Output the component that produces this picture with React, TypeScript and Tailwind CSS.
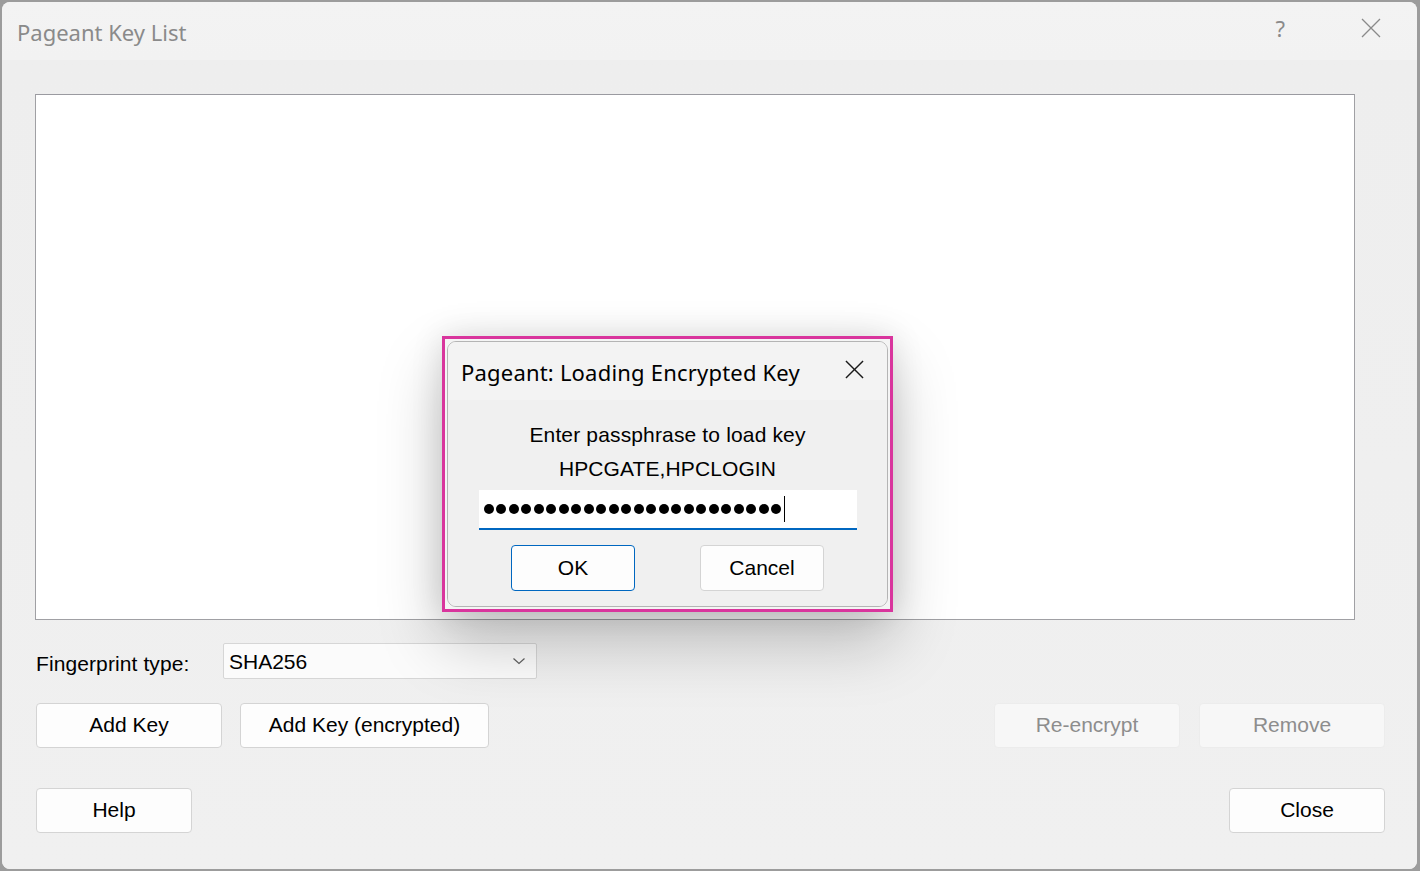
import React from "react";

const sans = { fontFamily: '"Liberation Sans", Arial, sans-serif' };
const ui = { fontFamily: '"Noto Sans", "Open Sans", sans-serif' };

function Btn({
  children,
  w,
  h = "h-[45px]",
  disabled,
  focused,
}: {
  children: React.ReactNode;
  w: string;
  h?: string;
  disabled?: boolean;
  focused?: boolean;
}) {
  return (
    <div
      className={`${w} ${h} flex items-center justify-center rounded-[4px] border text-[21px] ${
        disabled
          ? "bg-[#f7f7f7] border-[#ececec] text-[#8d8d8d]"
          : focused
          ? "bg-[#fdfdfd] border-[#0067c0] text-black"
          : "bg-[#fdfdfd] border-[#d4d4d4] text-black"
      }`}
      style={sans}
    >
      {children}
    </div>
  );
}

function XIcon({ size, color, sw }: { size: number; color: string; sw: number }) {
  return (
    <svg width={size} height={size} viewBox="0 0 20 20">
      <path d="M1 1 L19 19 M19 1 L1 19" stroke={color} strokeWidth={sw} fill="none" />
    </svg>
  );
}

export default function App() {
  const dots = Array.from({ length: 24 });
  return (
    <div className="w-[1420px] h-[871px] bg-[#9c9c9c] pt-[2px] pl-[2px] pr-[3px] pb-[2px]">
      <div className="relative w-full h-full rounded-[8px] bg-[#f0f0f0] flex flex-col overflow-hidden">
        {/* title bar */}
        <div className="h-[58px] shrink-0 flex items-center bg-gradient-to-b from-[#f3f3f3] to-[#f2f2f2] pl-[15px] pr-[36px]">
          <div className="text-[22px] text-[#8a8a8a] mt-[2px]" style={ui}>
            Pageant Key List
          </div>
          <div className="ml-auto flex items-center">
            <div className="text-[22px] text-[#8a8a8a] mr-[76px] -mt-[6px]" style={ui}>
              ?
            </div>
            <div className="-mt-[6px]">
              <XIcon size={20} color="#8a8a8a" sw={1.3} />
            </div>
          </div>
        </div>

        {/* content */}
        <div className="flex-1 flex flex-col pl-[34px] pr-[32px] pt-[34px] bg-gradient-to-b from-[#eeeeee] to-[#f0f0f0]">
          <div className="w-[1320px] h-[526px] -ml-[1px] bg-white border border-[#a0a0a4] border-t-[#9a9aa0]" />

          <div className="flex items-center mt-[23px]">
            <div className="w-[187px] text-[21px] text-black tracking-[0.1px] mt-[5px]" style={sans}>
              Fingerprint type:
            </div>
            <div className="w-[314px] h-[36px] bg-[#fbfbfb] border border-[#d6d6d6] rounded-[2px] flex items-center pl-[5px] pr-[10px]">
              <span className="text-[21px] text-black" style={sans}>
                SHA256
              </span>
              <svg className="ml-auto" width="14" height="10" viewBox="0 0 14 10">
                <path d="M1.5 2.5 L7 7.5 L12.5 2.5" stroke="#606060" strokeWidth="1.2" fill="none" />
              </svg>
            </div>
          </div>

          <div className="flex items-center mt-[23px]">
            <Btn w="w-[186px]">Add Key</Btn>
            <div className="w-[18px]" />
            <Btn w="w-[249px]">Add Key (encrypted)</Btn>
            <div className="ml-auto flex gap-[19px]">
              <Btn w="w-[186px]" disabled>
                Re-encrypt
              </Btn>
              <Btn w="w-[186px]" disabled>
                Remove
              </Btn>
            </div>
          </div>

          <div className="flex items-center mt-[40px]">
            <Btn w="w-[156px]">Help</Btn>
            <div className="ml-auto">
              <Btn w="w-[156px]">Close</Btn>
            </div>
          </div>
        </div>

        {/* modal overlay */}
        <div className="absolute left-[440px] top-[334px] w-[451px] h-[276px] border-[3px] border-[#d9359d] p-[2px] shadow-[0_30px_60px_rgba(0,0,0,0.22),0_0_30px_rgba(0,0,0,0.12)] bg-[#f4f4f4]">
          <div className="w-full h-full rounded-[9px] border border-[#b4b4b4] bg-[#f0f0f0] flex flex-col overflow-hidden">
            <div className="h-[58px] shrink-0 bg-[#f3f3f3] flex items-center pl-[13px] pr-[23px]">
              <div className="text-[22px] text-black mt-[2px] tracking-[0.2px]" style={ui}>
                Pageant: Loading Encrypted Key
              </div>
              <div className="ml-auto -mt-[3px]">
                <XIcon size={19} color="#1a1a1a" sw={1.5} />
              </div>
            </div>
            <div className="flex-1 flex flex-col items-center bg-[#f0f0f0]">
              <div className="text-[21px] text-black leading-[34px] mt-[18px] tracking-[0.15px]" style={sans}>
                Enter passphrase to load key
              </div>
              <div className="text-[21px] text-black leading-[34px] tracking-[0.1px]" style={sans}>
                HPCGATE,HPCLOGIN
              </div>
              <div className="w-[378px] h-[40px] mt-[4px] bg-white border-b-[2px] border-[#0067c0] flex items-center pl-[5px]">
                <div className="flex items-center gap-[2.5px]">
                  {dots.map((_, i) => (
                    <span key={i} className="block w-[10px] h-[10px] rounded-full bg-black" />
                  ))}
                </div>
                <span className="block w-[1px] h-[26px] bg-black ml-[3px]" />
              </div>
              <div className="flex gap-[65px] mt-[15px]">
                <Btn w="w-[124px]" h="h-[46px]" focused>
                  OK
                </Btn>
                <Btn w="w-[124px]" h="h-[46px]">Cancel</Btn>
              </div>
            </div>
          </div>
        </div>
      </div>
    </div>
  );
}
